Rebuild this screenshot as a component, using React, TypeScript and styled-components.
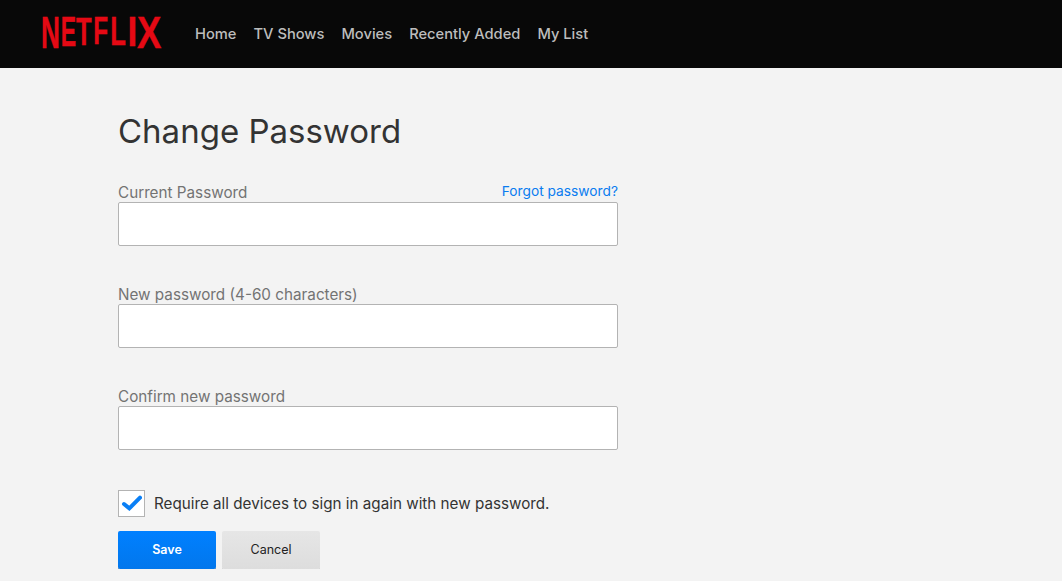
import styled, { createGlobalStyle } from "styled-components";

const GlobalStyle = createGlobalStyle`
  html, body {
    margin: 0;
    background: #f3f3f3;
    font-family: Inter, "Liberation Sans", sans-serif;
  }
`;

const Header = styled.header`
  height: 68px;
  background: #080808;
  display: flex;
  align-items: center;
  padding-left: 43px;
`;

const Logo = styled.svg`
  width: 120px;
  height: 34px;
  margin-right: 32px;
  display: block;
  overflow: visible;
`;

const LogoLetter = styled.text`
  fill: #e50914;
  stroke: #e50914;
  stroke-width: 0.25px;
  font-family: "Liberation Sans", sans-serif;
  font-weight: 700;
  font-size: 32px;
`;

const Nav = styled.nav`
  display: flex;
  gap: 17px;
`;

const NavLink = styled.a`
  color: #bdbdbd;
  font-size: 14.7px;
  font-weight: 500;
  line-height: 20px;
`;

const Main = styled.main`
  padding: 43px 0 0 118px;
  width: 500px;
`;

const Title = styled.h1`
  margin: 0 0 31px;
  font-size: 33px;
  font-weight: 400;
  line-height: 40px;
  color: #333;
`;

const Field = styled.div`
  margin-bottom: 38px;
`;

const LabelRow = styled.div`
  display: flex;
  justify-content: space-between;
  align-items: flex-end;
  height: 20px;
`;

const Label = styled.label`
  color: #737373;
  font-size: 15.25px;
  line-height: 20px;
  position: relative;
  top: 1px;
`;

const Forgot = styled.a`
  color: #0a7cf0;
  font-size: 13.75px;
  line-height: 20px;
  position: relative;
  top: -1px;
`;

const Input = styled.input`
  display: block;
  width: 100%;
  height: 44px;
  box-sizing: border-box;
  background: #fff;
  border: 1px solid #b3b3b3;
  border-radius: 2px;
  outline: none;
`;

const CheckRow = styled.div`
  display: flex;
  align-items: center;
  gap: 9px;
  margin-top: 40px;
`;

const CheckBox = styled.span`
  width: 27px;
  height: 27px;
  box-sizing: border-box;
  background: #fff;
  border: 1px solid #b3b3b3;
  display: flex;
  align-items: center;
  justify-content: center;
`;

const CheckText = styled.span`
  color: #333;
  font-size: 15.23px;
  line-height: 20px;
`;

const Buttons = styled.div`
  display: flex;
  gap: 6px;
  margin-top: 14px;
`;

const Button = styled.button<{ $primary?: boolean }>`
  width: 98px;
  height: 38px;
  border: none;
  border-radius: 2px;
  padding: 0 0 2px;
  font-family: inherit;
  font-size: 12.5px;
  font-weight: ${(p) => (p.$primary ? 600 : 400)};
  color: ${(p) => (p.$primary ? "#fff" : "#222")};
  background: ${(p) =>
    p.$primary
      ? "linear-gradient(#0080ff, #0277ec)"
      : "linear-gradient(#e6e6e6, #dddddd)"};
  box-shadow: 0 1px 0 rgba(0, 0, 0, ${(p) => (p.$primary ? 0.55 : 0.2)});
`;

// per letter placement, taller at both ends to follow the arc of the wordmark
const letters: { c: string; x: number; sx: number; sy: number; base: number }[] = [
  { c: "N", x: -1.9, sx: 0.82, sy: 1.4, base: 31 },
  { c: "E", x: 17.8, sx: 0.72, sy: 1.31, base: 29 },
  { c: "T", x: 33, sx: 0.8, sy: 1.24, base: 27.5 },
  { c: "F", x: 50.3, sx: 0.76, sy: 1.22, base: 27 },
  { c: "L", x: 67.2, sx: 0.8, sy: 1.27, base: 28 },
  { c: "I", x: 84.6, sx: 1.1, sy: 1.31, base: 29 },
  { c: "X", x: 94, sx: 1.14, sy: 1.4, base: 31 },
];

function NetflixLogo() {
  return (
    <Logo viewBox="0 0 120 34">
      {letters.map((l) => (
        <LogoLetter
          key={l.c}
          transform={`translate(${l.x} ${l.base}) scale(${l.sx} ${l.sy})`}
        >
          {l.c}
        </LogoLetter>
      ))}
    </Logo>
  );
}

const fields = ["Current Password", "New password (4-60 characters)", "Confirm new password"];

export default function App() {
  return (
    <>
      <GlobalStyle />
      <Header>
        <NetflixLogo />
        <Nav>
          <NavLink>Home</NavLink>
          <NavLink>TV Shows</NavLink>
          <NavLink>Movies</NavLink>
          <NavLink>Recently Added</NavLink>
          <NavLink>My List</NavLink>
        </Nav>
      </Header>
      <Main>
        <Title>Change Password</Title>
        {fields.map((f, i) => (
          <Field key={f}>
            <LabelRow>
              <Label>{f}</Label>
              {i === 0 && <Forgot>Forgot password?</Forgot>}
            </LabelRow>
            <Input type="password" />
          </Field>
        ))}
        <CheckRow>
          <CheckBox>
            <svg width="21" height="18" viewBox="0 0 21 18">
              <path
                d="M3 9 L8.3 13.4 L19 2.6"
                fill="none"
                stroke="#0a7ff5"
                strokeWidth="4"
                strokeLinecap="round"
              />
            </svg>
          </CheckBox>
          <CheckText>Require all devices to sign in again with new password.</CheckText>
        </CheckRow>
        <Buttons>
          <Button $primary>Save</Button>
          <Button>Cancel</Button>
        </Buttons>
      </Main>
    </>
  );
}
